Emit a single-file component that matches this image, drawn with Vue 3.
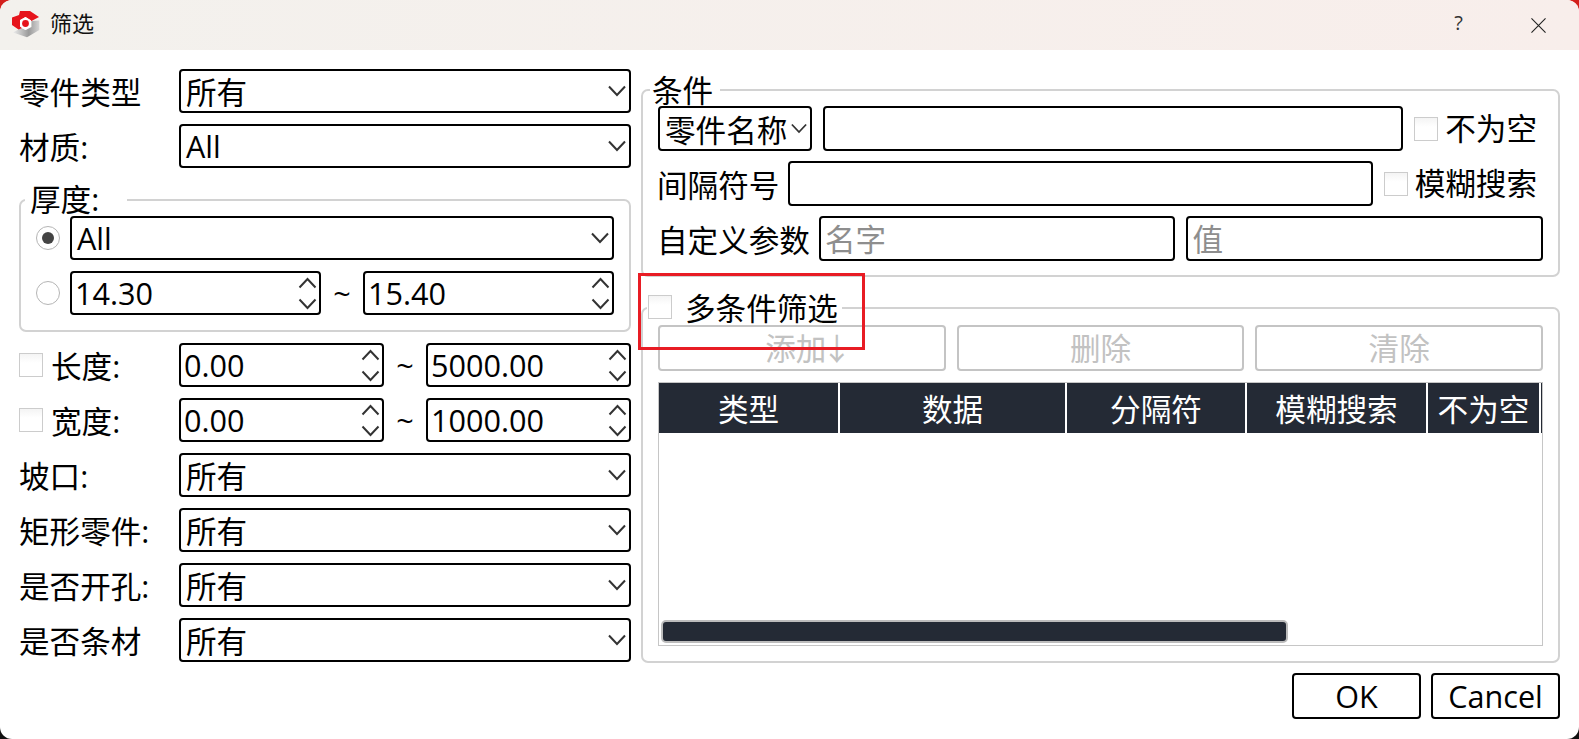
<script setup>
const topCombos = [
  { label: '零件类型', value: '所有' },
  { label: '材质:', value: 'All' }
]
const bottomCombos = [
  { label: '坡口:', value: '所有' },
  { label: '矩形零件:', value: '所有' },
  { label: '是否开孔:', value: '所有' },
  { label: '是否条材', value: '所有' }
]
const ranges = [
  { label: '长度:', from: '0.00', to: '5000.00' },
  { label: '宽度:', from: '0.00', to: '1000.00' }
]
const columns = [
  { name: '类型', cls: 'c1' },
  { name: '数据', cls: 'c2' },
  { name: '分隔符', cls: 'c3' },
  { name: '模糊搜索', cls: 'c4' },
  { name: '不为空', cls: 'c5' }
]
</script>

<template>
  <div class="window">
    <header class="titlebar">
      <svg class="logo" viewBox="0 0 28 28" width="28" height="28">
        <defs>
          <linearGradient id="lg" x1="0" y1="0" x2="1" y2="0">
            <stop offset="0" stop-color="#ececec" />
            <stop offset="0.6" stop-color="#9a9a9a" />
            <stop offset="1" stop-color="#d4d4d4" />
          </linearGradient>
        </defs>
        <path d="M27.3 10.5 L27.3 20 L15 27.3 L1 22.5 L9 18 L13.5 20 L19.5 17 L19.5 11 Z" fill="url(#lg)" />
        <path d="M8 1 L18 1 L27 7 L19.5 11 L13.5 7 L8 10 L8 16 L10 18 L6.5 19.5 L0 15 L0 7.5 L7 5 Z" fill="#e6141c" />
        <path d="M13.5 7 L18.9 10.3 L18.9 16.7 L13.5 20 L8.1 16.7 L8.1 10.3 Z" fill="#fff" />
        <circle cx="13.5" cy="13.5" r="3.4" fill="#e6141c" />
      </svg>
      <span class="title">筛选</span>
      <span class="help">?</span>
      <svg class="close" viewBox="0 0 16 16" width="16" height="16">
        <path d="M0.5 0.5 L15.5 15.5 M15.5 0.5 L0.5 15.5" stroke="#222" stroke-width="1.2" fill="none" />
      </svg>
    </header>

    <main class="body">
      <section class="left">
        <div v-for="c in topCombos" :key="c.label" class="row">
          <span class="label">{{ c.label }}</span>
          <div class="combo grow">
            <span :class="{ zh: c.value === '所有' }">{{ c.value }}</span>
            <svg class="chev" viewBox="0 0 18 12"><path d="M1 1.5 L9 10 L17 1.5" /></svg>
          </div>
        </div>

        <div class="group thick">
          <span class="legend thick-legend">厚度:</span>
          <div class="inner-row">
            <span class="radio on"><i></i></span>
            <div class="combo grow">
              <span>All</span>
              <svg class="chev" viewBox="0 0 18 12"><path d="M1 1.5 L9 10 L17 1.5" /></svg>
            </div>
          </div>
          <div class="inner-row">
            <span class="radio"></span>
            <div class="spin grow">
              <span>14.30</span>
              <span class="arrows">
                <svg viewBox="0 0 18 12"><path d="M1 10.5 L9 2 L17 10.5" /></svg>
                <svg viewBox="0 0 18 12"><path d="M1 1.5 L9 10 L17 1.5" /></svg>
              </span>
            </div>
            <span class="tilde">~</span>
            <div class="spin grow">
              <span>15.40</span>
              <span class="arrows">
                <svg viewBox="0 0 18 12"><path d="M1 10.5 L9 2 L17 10.5" /></svg>
                <svg viewBox="0 0 18 12"><path d="M1 1.5 L9 10 L17 1.5" /></svg>
              </span>
            </div>
          </div>
        </div>

        <div v-for="r in ranges" :key="r.label" class="row">
          <span class="label check-label"><span class="check"></span><span class="cl-text">{{ r.label }}</span></span>
          <div class="spin grow">
            <span>{{ r.from }}</span>
            <span class="arrows">
              <svg viewBox="0 0 18 12"><path d="M1 10.5 L9 2 L17 10.5" /></svg>
              <svg viewBox="0 0 18 12"><path d="M1 1.5 L9 10 L17 1.5" /></svg>
            </span>
          </div>
          <span class="tilde">~</span>
          <div class="spin grow">
            <span>{{ r.to }}</span>
            <span class="arrows">
              <svg viewBox="0 0 18 12"><path d="M1 10.5 L9 2 L17 10.5" /></svg>
              <svg viewBox="0 0 18 12"><path d="M1 1.5 L9 10 L17 1.5" /></svg>
            </span>
          </div>
        </div>

        <div v-for="c in bottomCombos" :key="c.label" class="row">
          <span class="label">{{ c.label }}</span>
          <div class="combo grow">
            <span class="zh">{{ c.value }}</span>
            <svg class="chev" viewBox="0 0 18 12"><path d="M1 1.5 L9 10 L17 1.5" /></svg>
          </div>
        </div>
      </section>

      <section class="right">
        <div class="group cond">
          <span class="legend cond-legend">条件</span>
          <div class="cond-row">
            <div class="combo small">
              <span class="zh">零件名称</span>
              <svg class="chev" viewBox="0 0 18 12"><path d="M1 1.5 L9 10 L17 1.5" /></svg>
            </div>
            <input class="input grow" />
            <span class="check"></span>
            <span class="after">不为空</span>
          </div>
          <div class="cond-row">
            <span class="txt">间隔符号</span>
            <input class="input grow" />
            <span class="check"></span>
            <span class="after">模糊搜索</span>
          </div>
          <div class="cond-row">
            <span class="txt">自定义参数</span>
            <input class="input grow" placeholder="名字" />
            <input class="input grow" placeholder="值" />
          </div>
        </div>

        <div class="group multi">
          <span class="legend multi-legend"><span class="check"></span><span class="ml-text">多条件筛选</span></span>
          <div class="btns">
            <button class="dis">添加<span class="arr">↓</span></button>
            <button class="dis">删除</button>
            <button class="dis">清除</button>
          </div>
          <div class="table">
            <div class="thead">
              <span v-for="c in columns" :key="c.name" class="th" :class="c.cls">{{ c.name }}</span>
            </div>
            <div class="hbar"></div>
          </div>
        </div>

        <div class="footer">
          <button class="action">OK</button>
          <button class="action">Cancel</button>
        </div>
      </section>
    </main>

    <div class="redbox"></div>
  </div>
</template>

<style>
html, body {
  margin: 0;
  overflow: hidden;
  background: linear-gradient(#d3201c 50%, #111 50%);
}
</style>

<style scoped>
.window {
  position: relative;
  width: 1579px;
  height: 739px;
  background: #fff;
  border-radius: 12px;
  overflow: hidden;
  font-family: "Open Sans", "Noto Sans CJK SC", sans-serif;
  font-size: 30.6px;
  color: #000;
  box-sizing: border-box;
}
.titlebar {
  height: 50px;
  display: flex;
  align-items: center;
  background: linear-gradient(90deg, #f3f1ed, #f8eeeb);
  padding: 0 33px 0 12px;
}
.logo { flex: none; margin-top: -2px; }
.title {
  font-size: 22px;
  margin-left: 10px;
  margin-bottom: 6px;
  color: #111;
  font-family: "Noto Sans CJK SC", sans-serif;
}
.help { margin-left: auto; font-size: 20px; color: #333; margin-right: 68px; margin-bottom: 6px; }
.close { flex: none; width: 15px; height: 15px; }

.body {
  display: flex;
  padding: 19px 19px 0 19px;
  gap: 10px;
}
.left {
  width: 612px;
  flex: none;
  display: flex;
  flex-direction: column;
  gap: 11px;
}
.right {
  flex: 1;
  min-width: 0;
  display: flex;
  flex-direction: column;
  padding-top: 20px;
}
.row {
  display: flex;
  align-items: center;
  height: 44px;
}
.label {
  box-sizing: border-box;
  width: 160px;
  flex: none;
  white-space: nowrap;
  line-height: 44px;
  padding-top: 2px;
}
.check-label { display: flex; align-items: center; padding-top: 0; }
.cl-text { margin-left: 8px; padding-top: 2px; }
.grow { flex: 1 1 0; min-width: 0; }

.combo, .spin, .input, .action {
  box-sizing: border-box;
  height: 44px;
  border: 2px solid #000;
  border-radius: 4px;
  background: #fff;
  font: inherit;
  color: #000;
}
.combo, .spin {
  display: flex;
  align-items: center;
  justify-content: space-between;
  padding: 0 3px 0 5px;
  line-height: 40px;
  white-space: nowrap;
}
.zh { padding-top: 2px; }
.spin { padding: 0 2px 0 3px; }
.chev { width: 18px; height: 12px; flex: none; }
.chev path, .arrows path { fill: none; stroke: #333; stroke-width: 2; }
.arrows {
  display: flex;
  flex-direction: column;
  gap: 9px;
  flex: none;
}
.arrows svg { width: 19px; height: 12px; display: block; }

.tilde { flex: none; width: 42px; text-align: center; line-height: 40px; }

.check {
  box-sizing: border-box;
  display: block;
  flex: none;
  width: 24px;
  height: 24px;
  border: 1px solid #ccc;
  background: linear-gradient(#f4f4f4, #fff 40%);
}
.radio {
  box-sizing: border-box;
  flex: none;
  width: 24px;
  height: 24px;
  border: 1px solid #b5b5b5;
  border-radius: 50%;
  margin-right: 10px;
  display: flex;
  align-items: center;
  justify-content: center;
}
.radio i {
  width: 12px;
  height: 12px;
  border-radius: 50%;
  background: #444;
}

.group {
  position: relative;
  box-sizing: border-box;
  border: 2px solid #d2d2d2;
  border-radius: 7px;
}
.legend {
  position: absolute;
  height: 28px;
  background: #fff;
  white-space: nowrap;
  line-height: 28px;
}
.thick {
  margin-top: 20px;
  height: 133px;
  padding: 15px 15px 0 15px;
  display: flex;
  flex-direction: column;
  gap: 11px;
}
.thick-legend { left: 4px; top: -16px; padding-left: 5px; width: 102px; box-sizing: border-box; }
.inner-row { display: flex; align-items: center; height: 44px; }

.cond {
  height: 188px;
  padding: 15px 15px 0 15px;
  display: flex;
  flex-direction: column;
  gap: 10px;
}
.cond-legend { left: 7px; top: -15px; padding: 0 7px 0 2px; }
.cond-row { display: flex; align-items: center; height: 45px; gap: 11px; }
.cond-row .combo, .cond-row .input { height: 45px; }
.combo.small { flex: none; width: 154px; padding: 0 3px 0 5px; }
.combo.small .chev { width: 16px; height: 11px; }
.after { margin-left: -4px; margin-right: 6px; white-space: nowrap; line-height: 45px; }
.txt { white-space: nowrap; line-height: 45px; flex: none; margin-left: -1px; margin-right: -2px; padding-top: 3px; }
.input { padding: 0 4px; outline: none; display: block; }
.input::placeholder { color: #8e8e8e; opacity: 1; }

.multi {
  margin-top: 30px;
  height: 356px;
  padding: 16px 15px 0 15px;
}
.multi-legend {
  left: 4px;
  top: -16px;
  display: flex;
  align-items: center;
  padding: 0 4px 0 1px;
}
.ml-text { margin-left: 13px; margin-top: 1px; }
.btns { display: flex; gap: 11px; }
.dis {
  flex: 1 1 0;
  box-sizing: border-box;
  height: 46px;
  border: 2px solid #c4c4c4;
  border-radius: 4px;
  background: #fff;
  color: #c2c2c2;
  font: inherit;
  line-height: 1;
  padding: 0;
}
.arr { display: inline-block; width: 12px; overflow: visible; text-indent: -5px; }
.table {
  box-sizing: border-box;
  margin-top: 11px;
  height: 264px;
  border: 1px solid #c6c6c6;
  display: flex;
  flex-direction: column;
  justify-content: space-between;
}
.thead {
  display: flex;
  height: 50px;
  gap: 2px;
}
.thead::after {
  content: "";
  width: 1px;
  background: #242a35;
}
.th {
  display: flex;
  align-items: center;
  justify-content: center;
  background: #242a35;
  color: #fff;
  white-space: nowrap;
}
.c1 { width: 179px; }
.c2 { width: 225px; }
.c3 { width: 178px; }
.c4 { width: 179px; }
.c5 { width: 111px; }
.hbar {
  box-sizing: border-box;
  width: 627px;
  height: 23px;
  margin: 0 0 2px 2px;
  background: #242a35;
  border: 2px solid #bcbcbc;
  border-radius: 5px;
}
.footer {
  display: flex;
  justify-content: flex-end;
  gap: 10px;
  margin-top: 10px;
}
.action {
  width: 129px;
  height: 46px;
  padding: 0;
}
.redbox {
  position: absolute;
  left: 638px;
  top: 273px;
  width: 227px;
  height: 77px;
  box-sizing: border-box;
  border: 3px solid #e81c24;
}
</style>
